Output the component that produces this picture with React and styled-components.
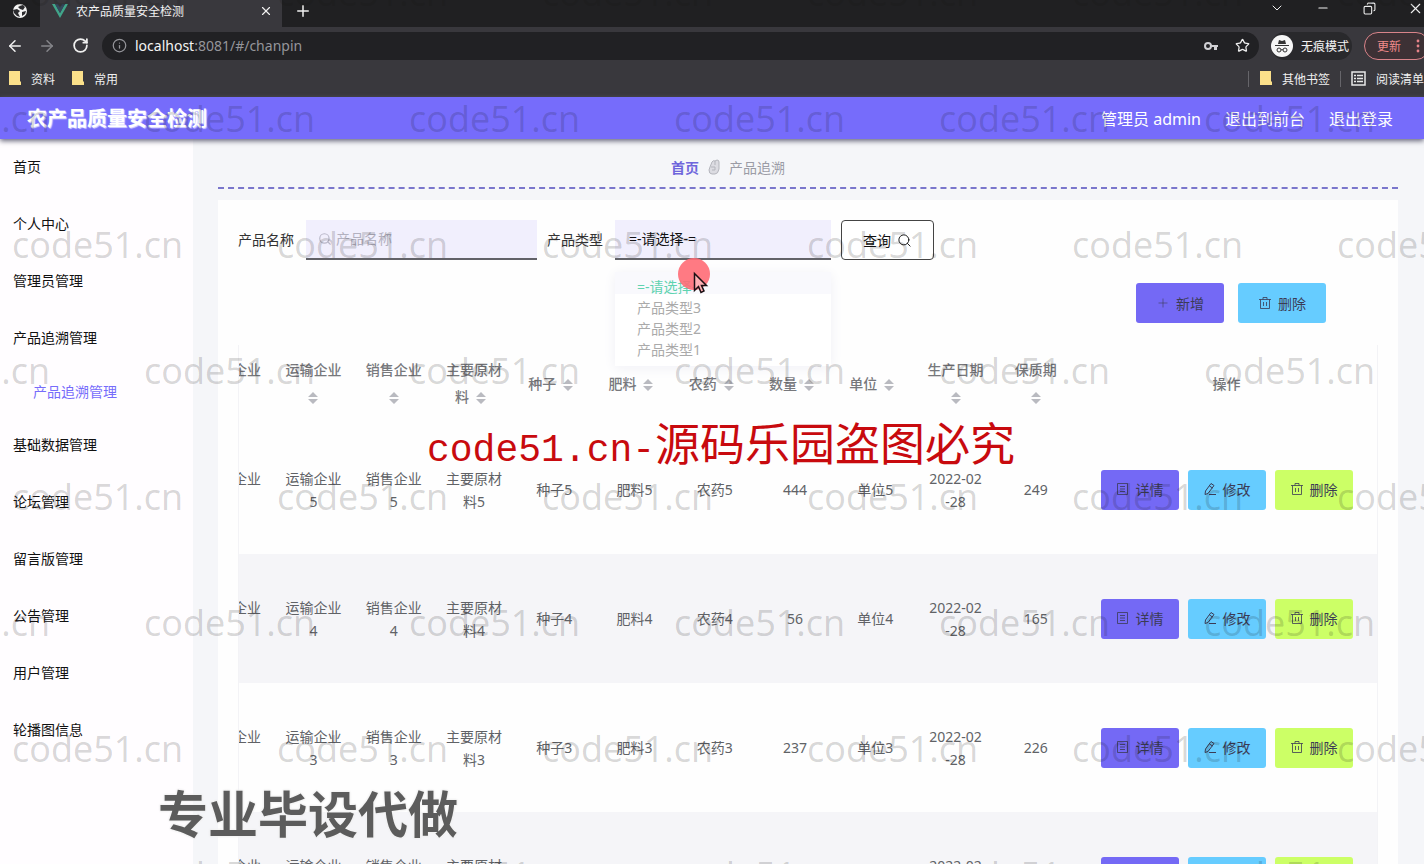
import React from "react";
import styled, { createGlobalStyle } from "styled-components";
import {
  ArrowLeft,
  ArrowRight,
  ChevronDown,
  Copy,
  Info,
  Minus,
  Plus,
  RotateCw,
  Search,
  Star,
  X,
} from "lucide-react";

const GlobalStyle = createGlobalStyle`
  * {
    box-sizing: border-box;
  }
  body {
    margin: 0;
    font-family: "Noto Sans", "Noto Sans CJK SC", sans-serif;
    font-size: 14px;
    color: #606266;
  }
  button, input, select {
    font: inherit;
    margin: 0;
  }
  a {
    color: inherit;
    text-decoration: none;
  }
`;

const Screen = styled.div`
  position: relative;
  display: flex;
  flex-direction: column;
  height: 100vh;
  overflow: hidden;
  background: #f5f6f9;
`;

/* browser window */

const IconButton = styled.button`
  display: flex;
  align-items: center;
  justify-content: center;
  width: ${(props) => props.$width || 32}px;
  height: 22px;
  padding: 0;
  border: 0;
  background: none;
  color: ${(props) => props.$color || "#f0f0f0"};
`;

const TabStrip = styled.div`
  display: flex;
  flex: none;
  height: 27px;
  background: #202022;
`;

const PinnedTab = styled.div`
  display: flex;
  justify-content: center;
  width: 40px;
  height: 22px;
  align-items: center;
`;

const Tab = styled.div`
  display: flex;
  align-items: center;
  gap: 8px;
  width: 242px;
  padding: 0 0 6px 12px;
  background: #39383d;
  color: #f2f2f2;
  font-size: 12px;
`;

const TabTitle = styled.span`
  flex: 1;
`;

const WindowButtons = styled.div`
  display: flex;
  margin-left: auto;
  height: 16px;
  margin-right: -14px;
  align-items: center;
`;

const Toolbar = styled.div`
  display: flex;
  align-items: center;
  flex: none;
  height: 37px;
  background: #39383d;
  overflow: hidden;
`;

const AddressBar = styled.div`
  display: flex;
  align-items: center;
  flex: 1;
  gap: 8px;
  height: 28px;
  margin-left: 6px;
  padding: 0 8px 0 10px;
  border-radius: 14px;
  background: #212124;
  color: #95959a;
`;

const Address = styled.span`
  flex: 1;
`;

const Host = styled.span`
  color: #f4f4f4;
`;

const Incognito = styled.div`
  display: flex;
  align-items: center;
  gap: 8px;
  height: 28px;
  margin: 0 12px;
  padding-right: 3px;
  border-radius: 14px;
  background: #29292c;
  color: #f4f4f4;
  font-size: 12px;
`;

const UpdateButton = styled.button`
  display: flex;
  align-items: center;
  justify-content: space-between;
  flex: none;
  width: 66px;
  height: 28px;
  margin-right: -6px;
  padding: 0 9px 0 12px;
  border: 1px solid #d9848a;
  border-radius: 14px;
  background: #3d3135;
  color: #f08a8a;
  font-size: 12px;
`;

const Bookmarks = styled.div`
  display: flex;
  align-items: center;
  flex: none;
  gap: 16px;
  height: 33px;
  padding: 0 0 4px 8px;
  background: #39383d;
  color: #f0f0f0;
  font-size: 12px;
  white-space: nowrap;
`;

const Bookmark = styled.a`
  display: flex;
  align-items: center;
  gap: 10px;
`;

const BookmarkGroup = styled.div`
  display: flex;
  align-items: center;
  gap: 10px;
  margin-left: auto;
`;

const Divider = styled.span`
  width: 1px;
  height: 16px;
  background: #66656a;
`;

/* application */

const Header = styled.header`
  display: flex;
  align-items: center;
  flex: none;
  z-index: 1;
  gap: 24px;
  height: 42px;
  padding: 0 31px 1px 27px;
  background: #766cfb;
  box-shadow: 0 2px 5px #66667a;
  color: #fff;
  font-size: 16px;
`;

const Title = styled.h1`
  flex: 1;
  margin: 0;
  font-size: 20px;
  font-weight: 700;
  text-shadow: 1px 1px 1px #d8d6ff;
`;

const Body = styled.div`
  display: flex;
  flex: 1;
  min-height: 0;
`;

const Sidebar = styled.nav`
  flex: none;
  width: 193px;
  background: #fffdff;
  color: #111;
`;

const MenuItem = styled.a`
  display: flex;
  align-items: center;
  height: ${(props) => (props.$sub ? 50 : 57)}px;
  padding-bottom: 3px;
  padding-left: ${(props) => (props.$sub ? 33 : 13)}px;
  color: ${(props) => (props.$sub ? "#766cfb" : "#111")};
`;

const Main = styled.main`
  flex: 1;
  min-width: 0;
  padding: 0 26px 0 25px;
`;

const Breadcrumb = styled.div`
  display: flex;
  align-items: center;
  justify-content: center;
  gap: 8px;
  height: 50px;
  margin-bottom: 11px;
  padding: 8px 160px 0 0;
  border-bottom: 2px dashed #7a76cc;
  color: #9b9ca6;
`;

const HomeLink = styled.a`
  color: #6f66dc;
  font-weight: 700;
`;

const Card = styled.section`
  padding: 20px 20px 0;
  background: #fefefe;
`;

const SearchForm = styled.form`
  display: flex;
  align-items: center;
  height: 40px;
  color: #333;
`;

const Label = styled.label`
  margin-right: 12px;
  padding-bottom: 2px;
`;

const Field = styled.div`
  position: relative;
  display: flex;
  align-items: center;
  width: ${(props) => props.$width}px;
  height: 40px;
  margin-right: 10px;
  border-bottom: 2px solid #626268;
  background: #f1effd;
  color: #b9b7c8;
`;

const TextInput = styled.input`
  width: 100%;
  height: 36px;
  padding: 0 8px 2px 4px;
  border: 0;
  background: none;
  &::placeholder {
    color: #b3b1c0;
  }
`;

const FieldIcon = styled.span`
  display: flex;
  margin-left: 12px;
`;

const Select = styled.select`
  appearance: none;
  width: 100%;
  height: 38px;
  padding: 0 14px 2px;
  border: 0;
  background: none;
  color: #111;
`;

const Options = styled.ul`
  position: absolute;
  top: 52px;
  left: 0;
  width: 100%;
  margin: 0;
  padding: 4px 0 6px;
  list-style: none;
  background: linear-gradient(#f9f9fd 22px, #fff 22px);
  box-shadow: 0 2px 12px #f0f0f6;
`;

const Option = styled.li`
  padding-left: 22px;
  line-height: 21px;
  color: ${(props) => (props.$selected ? "#5fd3b0" : "#aaa")};
`;

const SearchButton = styled.button`
  display: flex;
  align-items: center;
  justify-content: center;
  gap: 6px;
  width: 93px;
  height: 40px;
  border: 1px solid #444;
  border-radius: 4px;
  background: #fff;
  color: #111;
`;

const Actions = styled.div`
  display: flex;
  justify-content: flex-end;
  gap: 14px;
  padding: 23px 52px 22px 0;
`;

const Button = styled.button`
  display: flex;
  align-items: center;
  justify-content: center;
  gap: 6px;
  width: ${(props) => (props.$large ? 88 : 78)}px;
  height: 40px;
  padding: 0 0 1px;
  border: 0;
  border-radius: 3px;
  background: ${(props) => props.$color};
  color: #3b3b55;
`;

const TableWrapper = styled.div`
  overflow: hidden;
  border: solid #f3f3f6;
  border-width: 0 1px;
`;

/* scrolled sideways, so the first column is cut off */
const Table = styled.table`
  width: calc(100% + 46px);
  margin-left: -46px;
  table-layout: fixed;
  border-collapse: collapse;
  text-align: center;
`;

const Row = styled.tr`
  height: 129px;
  background: ${(props) => (props.$striped ? "#f5f5f8" : "#fefefe")};
`;

const HeadCell = styled.th`
  width: ${(props) => props.$width || "auto"};
  height: 80px;
  padding: 0 10px 4px;
  color: #77787c;
  font-weight: 500;
  line-height: 27px;
`;

const Cell = styled.td`
  padding: 0 10px;
  line-height: 23px;
`;

const CellButtons = styled.div`
  display: flex;
  justify-content: center;
  gap: 9px;
`;

const SortIcon = styled.svg`
  vertical-align: middle;
`;

/* overlays */

const Watermarks = styled.div`
  position: absolute;
  z-index: 3;
  top: -70px;
  left: 0;
  overflow: hidden;
  width: 100%;
  pointer-events: none;
  color: rgba(20, 20, 20, 0.18);
  font-family: "Open Sans", sans-serif;
  font-size: 36px;
  line-height: 126px;
`;

const WatermarkRow = styled.div`
  display: flex;
  margin-left: ${(props) => (props.$shifted ? -121 : 12)}px;
`;

const Watermark = styled.span`
  flex: none;
  width: 265px;
`;

const Notice = styled.div`
  position: absolute;
  z-index: 4;
  top: 412px;
  left: 427px;
  pointer-events: none;
  color: #c80a0e;
  font-family: "Liberation Mono", "Noto Sans CJK SC", monospace;
  font-size: 38px;
  line-height: 60px;
  white-space: nowrap;
`;

const NoticeText = styled.span`
  font-family: "Noto Sans CJK SC", sans-serif;
  font-size: 45px;
`;

const Slogan = styled.div`
  position: absolute;
  z-index: 4;
  top: 784px;
  left: 158px;
  color: #5c5c5c;
  font-size: 50px;
  font-weight: 700;
  line-height: 60px;
  text-shadow: 0 0 3px #fff, 0 0 3px #fff, 0 0 2px #aaa;
`;

const Pointer = styled.svg`
  position: absolute;
  z-index: 5;
  top: 258px;
  left: 678px;
`;

const PURPLE = "#7469f5";
const BLUE = "#66ccff";
const GREEN = "#ccff66";

const menu = [
  { text: "首页" },
  { text: "个人中心" },
  { text: "管理员管理" },
  { text: "产品追溯管理" },
  { text: "产品追溯管理", sub: true },
  { text: "基础数据管理" },
  { text: "论坛管理" },
  { text: "留言版管理" },
  { text: "公告管理" },
  { text: "用户管理" },
  { text: "轮播图信息" },
];

const columns = [
  "生产企业",
  "运输企业",
  "销售企业",
  "主要原材料",
  "种子",
  "肥料",
  "农药",
  "数量",
  "单位",
  "生产日期",
  "保质期",
];

const rows = [
  { id: 5, count: 444, days: 249 },
  { id: 4, count: 56, days: 165 },
  { id: 3, count: 237, days: 226 },
  { id: 2, count: 128, days: 312 },
];

const GlobeIcon = () => (
  <svg width="16" height="16" viewBox="0 0 16 16">
    <circle cx="8" cy="8" r="7" fill="#f4f4f4" />
    <path
      d="M1 7l4-1 3 2-2 2 2 4-3-1-3-3zM8 3l3-1 2 2-2 3-3-1-2-2zM10 9l4-1-1 3-3 2z"
      fill="#2b2b2e"
    />
  </svg>
);

const VueIcon = () => (
  <svg width="16" height="14" viewBox="0 0 16 14">
    <path d="M0 0h3l5 9 5-9h3L8 14z" fill="#41a58a" />
    <path d="M3 0h3l2 4 2-4h3L8 9z" fill="#35495e" />
  </svg>
);

const KeyIcon = () => (
  <svg width="16" height="12" viewBox="0 0 16 12">
    <circle cx="5" cy="6" r="3" fill="none" stroke="#d0d0d4" strokeWidth="2" />
    <path d="M8 5h7v2h-1v3h-3V7H8z" fill="#d0d0d4" />
  </svg>
);

const IncognitoIcon = () => (
  <svg width="22" height="22" viewBox="0 0 22 22">
    <circle cx="11" cy="11" r="11" fill="#f6f6f6" />
    <path d="M7 9l1-4 3 1 3-1 1 4zM4 10h14v1H4z" fill="#333" />
    <g fill="none" stroke="#333">
      <circle cx="8" cy="15" r="2" />
      <circle cx="14" cy="15" r="2" />
      <path d="M10 15q1-1 2 0" />
    </g>
  </svg>
);

const MoreIcon = () => (
  <svg width="4" height="16" viewBox="0 0 4 16" fill="#e8848a">
    <circle cx="2" cy="3" r="1.4" />
    <circle cx="2" cy="8" r="1.4" />
    <circle cx="2" cy="13" r="1.4" />
  </svg>
);

const FolderIcon = () => (
  <svg width="13" height="15" viewBox="0 0 13 15">
    <path d="M1 0h11v10l1 1v3H1z" fill="#fbe08a" />
  </svg>
);

const ReadingIcon = () => (
  <svg width="15" height="15" viewBox="0 0 15 15">
    <path
      d="M1 1h13v13H1zM3 4.500h2M6 4.500h6M3 7.500h2M6 7.500h6M3 10.500h2M6 10.500h6"
      fill="none"
      stroke="#e8e8e8"
      strokeWidth="1.500"
    />
  </svg>
);

const HandIcon = () => (
  <svg width="14" height="16" viewBox="0 0 14 16" fill="#dcdce2" stroke="#b4b5bc">
    <path d="M3 8l2-5q1-2 3-1l2-1q2 0 2 2v7q-1 5-4 5H5q-3 0-3-4zM8 2v4M4 8h4v3H5" />
  </svg>
);

const TrashIcon = () => (
  <svg width="14" height="14" viewBox="0 0 14 14" fill="none" stroke="currentColor" strokeOpacity="0.8">
    <path d="M1 3.500h12M2.500 3.500v9h9v-9M5 3.500v-2h4v2M5.500 6v4M8.500 6v4" />
  </svg>
);

const DocumentIcon = () => (
  <svg width="14" height="14" viewBox="0 0 14 14" fill="none" stroke="currentColor" strokeOpacity="0.8">
    <path d="M1.500 1.500h10v11h-10zM4 4.500h5M4 7h5M4 9.500h5" />
  </svg>
);

const EditIcon = () => (
  <svg width="14" height="14" viewBox="0 0 14 14" fill="none" stroke="currentColor">
    <path d="M8 1.500l3 2-6 8-3 1 .5-3.500zM6.500 4l3 2M6 12.500h7" />
  </svg>
);

const Sort = () => (
  <SortIcon width="24" height="14" viewBox="0 0 24 14" fill="#b9bac0">
    <path d="M7 6l5-5 5 5zM7 8h10l-5 5z" />
  </SortIcon>
);

const Browser = () => (
  <>
    <TabStrip>
      <PinnedTab>
        <GlobeIcon />
      </PinnedTab>
      <Tab>
        <VueIcon />
        <TabTitle>农产品质量安全检测</TabTitle>
        <IconButton aria-label="关闭标签页">
          <X size={14} />
        </IconButton>
      </Tab>
      <IconButton $width={42} aria-label="新标签页">
        <Plus size={18} />
      </IconButton>
      <WindowButtons>
        <IconButton $width={46} aria-label="搜索标签页">
          <ChevronDown size={16} strokeWidth={1.5} />
        </IconButton>
        <IconButton $width={46} aria-label="最小化">
          <Minus size={14} strokeWidth={2} />
        </IconButton>
        <IconButton $width={46} aria-label="还原">
          <Copy size={13} transform="scale(-1 1)" />
        </IconButton>
        <IconButton $width={46} aria-label="关闭">
          <X size={17} strokeWidth={1.5} />
        </IconButton>
      </WindowButtons>
    </TabStrip>
    <Toolbar>
      <IconButton $width={30} aria-label="后退">
        <ArrowLeft size={18} />
      </IconButton>
      <IconButton $width={34} $color="#85858a" aria-label="前进">
        <ArrowRight size={18} />
      </IconButton>
      <IconButton aria-label="刷新">
        <RotateCw size={17} strokeWidth={2.5} />
      </IconButton>
      <AddressBar>
        <Info size={15} />
        <Address>
          <Host>localhost</Host>:8081/#/chanpin
        </Address>
        <IconButton aria-label="密码">
          <KeyIcon />
        </IconButton>
        <IconButton $width={16} aria-label="收藏">
          <Star size={15} />
        </IconButton>
      </AddressBar>
      <Incognito>
        <IncognitoIcon />
        无痕模式
      </Incognito>
      <UpdateButton>
        更新
        <MoreIcon />
      </UpdateButton>
    </Toolbar>
    <Bookmarks>
      <Bookmark href="#data">
        <FolderIcon />
        资料
      </Bookmark>
      <Bookmark href="#common">
        <FolderIcon />
        常用
      </Bookmark>
      <BookmarkGroup>
        <Divider />
        <Bookmark href="#other">
          <FolderIcon />
          其他书签
        </Bookmark>
        <Divider />
        <Bookmark href="#reading">
          <ReadingIcon />
          阅读清单
        </Bookmark>
      </BookmarkGroup>
    </Bookmarks>
  </>
);

const SearchBar = () => (
  <SearchForm onSubmit={(e) => e.preventDefault()}>
    <Label htmlFor="name">产品名称</Label>
    <Field $width={231}>
      <FieldIcon>
        <Search size={14} />
      </FieldIcon>
      <TextInput id="name" placeholder="产品名称" />
    </Field>
    <Label htmlFor="type">产品类型</Label>
    <Field $width={216}>
      <Select id="type">
        <option>=-请选择-=</option>
        <option>产品类型3</option>
        <option>产品类型2</option>
        <option>产品类型1</option>
      </Select>
      <Options>
        <Option $selected>=-请选择-=</Option>
        <Option>产品类型3</Option>
        <Option>产品类型2</Option>
        <Option>产品类型1</Option>
      </Options>
    </Field>
    <SearchButton>
      查询
      <Search size={15} strokeWidth={1.5} />
    </SearchButton>
  </SearchForm>
);

const ProductRow = ({ product, striped }) => (
  <Row $striped={striped}>
    <Cell>生产企业{product.id}</Cell>
    <Cell>运输企业{product.id}</Cell>
    <Cell>销售企业{product.id}</Cell>
    <Cell>主要原材料{product.id}</Cell>
    <Cell>种子{product.id}</Cell>
    <Cell>肥料{product.id}</Cell>
    <Cell>农药{product.id}</Cell>
    <Cell>{product.count}</Cell>
    <Cell>单位{product.id}</Cell>
    <Cell>
      2022-02
      <br />
      -28
    </Cell>
    <Cell>{product.days}</Cell>
    <Cell>
      <CellButtons>
        <Button $color={PURPLE}>
          <DocumentIcon />
          详情
        </Button>
        <Button $color={BLUE}>
          <EditIcon />
          修改
        </Button>
        <Button $color={GREEN}>
          <TrashIcon />
          删除
        </Button>
      </CellButtons>
    </Cell>
  </Row>
);

const WatermarkLayer = () => (
  <Watermarks aria-hidden="true">
    {[0, 1, 2, 3, 4, 5, 6, 7].map((row) => (
      <WatermarkRow key={row} $shifted={row % 2 === 1}>
        {[0, 1, 2, 3, 4, 5].map((col) => (
          <Watermark key={col}>code51.cn</Watermark>
        ))}
      </WatermarkRow>
    ))}
  </Watermarks>
);

export default function App() {
  return (
    <Screen>
      <GlobalStyle />
      <Browser />
      <Header>
        <Title>农产品质量安全检测</Title>
        <span>管理员 admin</span>
        <a href="#front">退出到前台</a>
        <a href="#logout">退出登录</a>
      </Header>
      <Body>
        <Sidebar>
          {menu.map((item, i) => (
            <MenuItem key={i} href="#menu" $sub={item.sub}>
              {item.text}
            </MenuItem>
          ))}
        </Sidebar>
        <Main>
          <Breadcrumb>
            <HomeLink href="#home">首页</HomeLink>
            <HandIcon />
            <span>产品追溯</span>
          </Breadcrumb>
          <Card>
            <SearchBar />
            <Actions>
              <Button $large $color={PURPLE}>
                <Plus size={14} strokeWidth={1} />
                新增
              </Button>
              <Button $large $color={BLUE}>
                <TrashIcon />
                删除
              </Button>
            </Actions>
            <TableWrapper>
              <Table>
                <thead>
                  <tr>
                    {columns.map((name) => (
                      <HeadCell key={name}>
                        {name}
                        <Sort />
                      </HeadCell>
                    ))}
                    <HeadCell $width="301px">操作</HeadCell>
                  </tr>
                </thead>
                <tbody>
                  {rows.map((product, i) => (
                    <ProductRow
                      key={product.id}
                      product={product}
                      striped={i % 2 === 1}
                    />
                  ))}
                </tbody>
              </Table>
            </TableWrapper>
          </Card>
        </Main>
      </Body>
      <WatermarkLayer />
      <Notice>
        code51.cn-<NoticeText>源码乐园盗图必究</NoticeText>
      </Notice>
      <Slogan>专业毕设代做</Slogan>
      <Pointer width="32" height="36" viewBox="0 0 32 36">
        <circle cx="16" cy="16" r="16" fill="#ff6b75" fillOpacity="0.9" />
        <path
          d="M16.500 15.500v17l4-4 2.500 6 3-1.500-2.500-5.500h5z"
          fill="#ffb0b4"
          stroke="#1c1014"
          strokeWidth="1.500"
        />
      </Pointer>
    </Screen>
  );
}
